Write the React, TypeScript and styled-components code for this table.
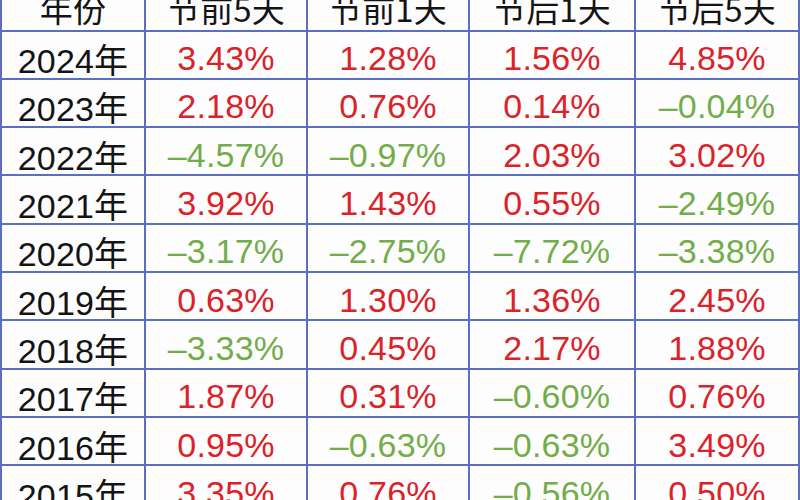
import { Fragment } from "react";
import styled, { createGlobalStyle } from "styled-components";

type Row = { year: string; values: string[] };

const headers = ["年份", "节前5天", "节前1天", "节后1天", "节后5天"];

const rows: Row[] = [
  { year: "2024年", values: ["3.43%", "1.28%", "1.56%", "4.85%"] },
  { year: "2023年", values: ["2.18%", "0.76%", "0.14%", "-0.04%"] },
  { year: "2022年", values: ["-4.57%", "-0.97%", "2.03%", "3.02%"] },
  { year: "2021年", values: ["3.92%", "1.43%", "0.55%", "-2.49%"] },
  { year: "2020年", values: ["-3.17%", "-2.75%", "-7.72%", "-3.38%"] },
  { year: "2019年", values: ["0.63%", "1.30%", "1.36%", "2.45%"] },
  { year: "2018年", values: ["-3.33%", "0.45%", "2.17%", "1.88%"] },
  { year: "2017年", values: ["1.87%", "0.31%", "-0.60%", "0.76%"] },
  { year: "2016年", values: ["0.95%", "-0.63%", "-0.63%", "3.49%"] },
  { year: "2015年", values: ["3.35%", "0.76%", "-0.56%", "0.50%"] },
];

const GlobalStyle = createGlobalStyle`
  html, body {
    margin: 0;
    padding: 0;
    background: #fdfdfd;
    overflow: hidden;
  }
`;

const Page = styled.div`
  width: 800px;
  height: 500px;
  overflow: hidden;
`;

// blue grid lines come from the table background showing through the gaps
const Table = styled.div`
  display: grid;
  grid-template-columns: 142px 160px 160px 164px 162px;
  grid-auto-rows: 46.3px;
  gap: 2px;
  padding: 2px;
  margin-top: -18.8px;
  background: #5b6fc2;
  width: 800px;
  box-sizing: border-box;
`;

const Cell = styled.div<{ $tone?: "up" | "down" | "plain" }>`
  background: #fdfdfd;
  display: flex;
  align-items: center;
  justify-content: center;
  padding-top: 8px;
  box-sizing: border-box;
  font-family: "Liberation Sans", "Noto Sans CJK SC", sans-serif;
  font-size: 34px;
  letter-spacing: 0.2px;
  color: ${({ $tone }) =>
    $tone === "up" ? "#dc2229" : $tone === "down" ? "#72ad4a" : "#141414"};
  white-space: nowrap;
`;

const HeaderCell = styled(Cell)`
  font-family: "Noto Sans CJK SC", sans-serif;
  font-size: 33px;
  padding-top: 4px;
`;

const YearCell = styled(Cell)`
  font-family: "Liberation Sans", "Noto Sans CJK SC", sans-serif;
`;

export default function App() {
  return (
    <Page>
      <GlobalStyle />
      <Table>
        {headers.map((h) => (
          <HeaderCell key={h}>{h}</HeaderCell>
        ))}
        {rows.map((r) => (
          <Fragment key={r.year}>
            <YearCell>{r.year}</YearCell>
            {r.values.map((v, i) => {
              const down = v.startsWith("-");
              return (
                <Cell key={i} $tone={down ? "down" : "up"}>
                  {down ? "–" + v.slice(1) : v}
                </Cell>
              );
            })}
          </Fragment>
        ))}
      </Table>
    </Page>
  );
}
